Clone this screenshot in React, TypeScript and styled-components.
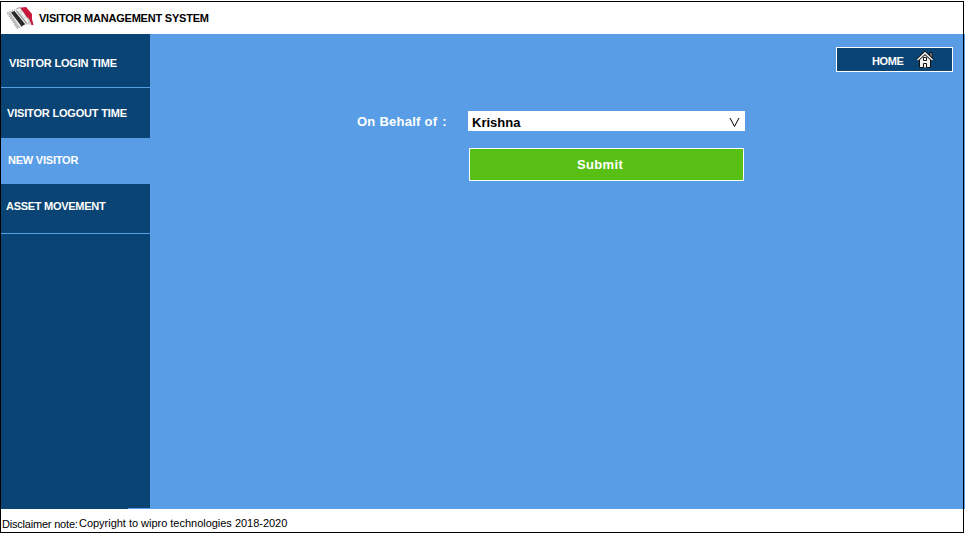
import React from "react";
import styled, { createGlobalStyle } from "styled-components";

const Global = createGlobalStyle`
  * { box-sizing: border-box; }
  body { margin: 0; background: #fff; font-family: "Liberation Sans", Arial, sans-serif; overflow: hidden; }
`;

const Page = styled.div`
  width: 965px;
  height: 535px;
  padding: 1px 1px 2px 0;
  background: linear-gradient(#589de6, #589de6) right 0 top 34px / 1px 475px no-repeat #fff;
`;

const Frame = styled.div`
  width: 964px;
  height: 532px;
  border: 1px solid #000;
  display: flex;
  flex-direction: column;
`;

const Header = styled.header`
  height: 32px;
  flex: none;
  display: flex;
  align-items: center;
  padding-left: 5px;
`;

const Title = styled.h1`
  margin: 0 0 0 5px;
  font-size: 11px;
  line-height: 14px;
  font-weight: 700;
  letter-spacing: -0.22px;
  white-space: nowrap;
`;

const Body = styled.div`
  height: 475px;
  flex: none;
  display: flex;
`;

const Sidebar = styled.nav`
  width: 149px;
  flex: none;
  background: linear-gradient(#589de6, #589de6) right bottom / 22px 1px no-repeat #0a4474;
`;

const NavItem = styled.a<{ $height: number; $indent: number; $top: number; $spacing: number; $active?: boolean; $line?: boolean }>`
  display: block;
  height: ${(p) => p.$height}px;
  padding: ${(p) => p.$top}px 0 0 ${(p) => p.$indent}px;
  font-size: 11px;
  line-height: 14px;
  font-weight: 700;
  letter-spacing: ${(p) => p.$spacing}px;
  white-space: nowrap;
  color: #fff;
  background: ${(p) => (p.$active ? "#589de6" : "transparent")};
  border-bottom: ${(p) => (p.$line ? "1px solid #589de6" : "0")};
`;

const Main = styled.main`
  flex: 1;
  background: #589de6;
  display: flex;
  flex-direction: column;
`;

const HomeButton = styled.button`
  align-self: flex-end;
  flex: none;
  width: 117px;
  height: 25px;
  margin: 13px 10px 0 0;
  padding: 0 18px 0 35px;
  display: flex;
  align-items: center;
  justify-content: space-between;
  border: 1px solid #fff;
  background: #0a4474;
  color: #fff;
  font: 700 11px/14px "Liberation Sans", Arial, sans-serif;
  letter-spacing: -0.4px;
`;

const HomeLabel = styled.span`
  padding-top: 3px;
`;

const Form = styled.form`
  display: grid;
  grid-template-columns: 111px 277px;
  grid-template-rows: 20px 33px;
  row-gap: 17px;
  margin: 39px 0 0 207px;
`;

const Label = styled.label`
  display: flex;
  gap: 5px;
  color: #fff;
  font-size: 13px;
  line-height: 21px;
  font-weight: 700;
  letter-spacing: 0.25px;
  white-space: nowrap;
`;

const Select = styled.div`
  display: flex;
  justify-content: space-between;
  padding: 1px 5px 0 4px;
  background: #fff;
  color: #000;
  font-size: 13px;
  line-height: 21px;
  font-weight: 700;
`;

const Submit = styled.button`
  grid-column: 2;
  width: 275px;
  margin-left: 1px;
  padding: 0 13px 0 0;
  border: 1px solid #fff;
  background: #58c014;
  color: #fff;
  font: 700 13px/20px "Liberation Sans", Arial, sans-serif;
  letter-spacing: 0.35px;
`;

const Footer = styled.footer`
  flex: 1;
  display: flex;
  padding: 7px 0 0 1px;
  font-size: 11px;
  line-height: 14px;
  white-space: nowrap;
`;

const Disclaimer = styled.span`
  width: 77px;
  padding-top: 1px;
  letter-spacing: -0.2px;
`;

const Copyright = styled.span`
  letter-spacing: -0.02px;
`;

const CardLogo = () => (
  <svg width="28" height="24" viewBox="0 0 28 24">
    <path d="M11 2 20 1 26 8V13L27.500 19 25.500 19 22 12 15 7Z" fill="#c8193c" />
    <path d="M19 11 23 13 25 18 20 18Z" fill="#eee" stroke="#b5a5a5" strokeWidth="0.6" />
    <path d="M1 7 14 1.500 24 16 11 22.500Z" fill="#f1f1ef" stroke="#888" strokeWidth="0.8" strokeDasharray="1.500 1" />
    <path d="M2 7 4 6 13.500 21 11 22Z" fill="#bbb" />
    <path d="M5 6.500 8.500 5 19 18 15.500 20.500Z" fill="#292929" />
    <path d="M10 5 11 4.500 21 17 20 17.500Z" fill="#888" />
    <path d="M14 5 17 6 20 11 18 12Z" fill="#fff" stroke="#bbb" strokeWidth="0.6" />
  </svg>
);

const House = () => (
  <svg width="18" height="18" viewBox="0 0 18 18">
    <path d="M14 1.500h2v6h-2z" fill="#ccc" stroke="#111" />
    <path d="M3.500 8 9 3 14.500 8V16.500H3.500Z" fill="#f0f0ee" stroke="#111" />
    <path d="M1.500 9 9 2 16.500 9" fill="none" stroke="#111" strokeWidth="3.600" />
    <path d="M1.500 9 9 2 16.500 9" fill="none" stroke="#f0f0ee" strokeWidth="1.700" />
    <path d="M4 9 9 4.500 14 9V10H4Z" fill="#f0f0ee" />
    <path d="M7.500 6.500h3v3h-3z" fill="#fff" stroke="#111" />
    <path d="M7.500 16.500v-4h3v4" fill="#eee" stroke="#111" />
  </svg>
);

const Chevron = () => (
  <svg width="11" height="18" viewBox="0 0 11 18">
    <path d="M1 6 5.5 14.5 10 6" fill="none" stroke="#000" />
  </svg>
);

export default function App() {
  return (
    <Page>
      <Global />
      <Frame>
        <Header>
          <CardLogo />
          <Title>VISITOR MANAGEMENT SYSTEM</Title>
        </Header>
        <Body>
          <Sidebar>
            <NavItem $height={54} $indent={8} $top={22} $spacing={-0.18} $line>VISITOR LOGIN TIME</NavItem>
            <NavItem $height={50} $indent={6} $top={18} $spacing={-0.18}>VISITOR LOGOUT TIME</NavItem>
            <NavItem $height={46} $indent={7} $top={15} $spacing={-0.22} $active>NEW VISITOR</NavItem>
            <NavItem $height={50} $indent={5} $top={15} $spacing={-0.28} $line>ASSET MOVEMENT</NavItem>
          </Sidebar>
          <Main>
            <HomeButton><HomeLabel>HOME</HomeLabel><House /></HomeButton>
            <Form>
              <Label><span>On Behalf of</span><span>:</span></Label>
              <Select>Krishna<Chevron /></Select>
              <Submit type="button">Submit</Submit>
            </Form>
          </Main>
        </Body>
        <Footer>
          <Disclaimer>Disclaimer note:</Disclaimer>
          <Copyright>Copyright to wipro technologies 2018-2020</Copyright>
        </Footer>
      </Frame>
    </Page>
  );
}
